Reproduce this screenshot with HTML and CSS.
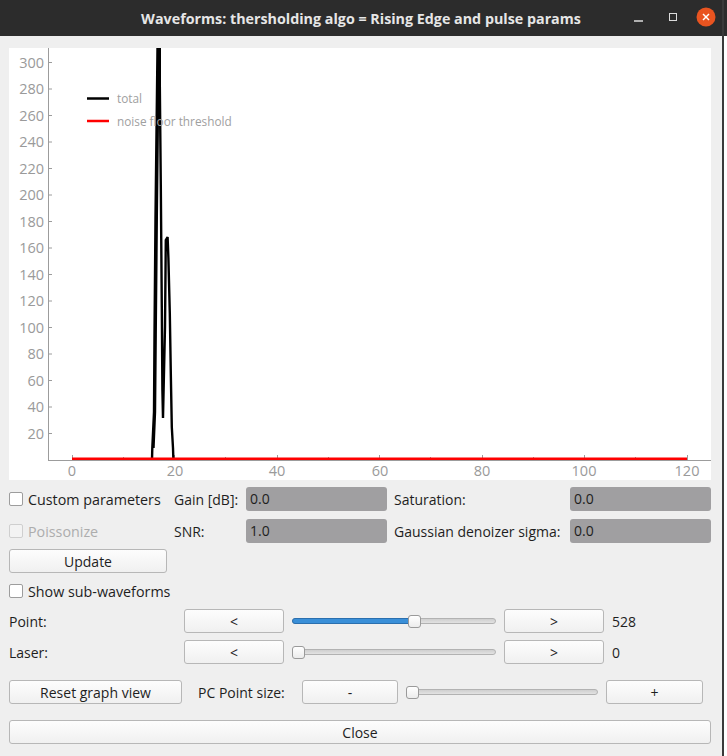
FILE: index.html
```html
<!DOCTYPE html>
<html>
<head>
<meta charset="utf-8">
<title>Waveforms</title>
<link rel="stylesheet" href="styles.css">
</head>
<body>
<div class="screen">
  <div class="dialog">
    <div class="titlebar">
      <div></div>
      <div class="title">Waveforms: thersholding algo = Rising Edge and pulse params</div>
      <div class="wincontrols">
        <svg width="90" height="36" viewBox="0 0 90 36">
          <line x1="2" y1="21" x2="11" y2="21" stroke="#dcdcdc" stroke-width="1.5"/>
          <rect x="37.5" y="13.5" width="7" height="7" fill="none" stroke="#dcdcdc" stroke-width="1"/>
          <circle cx="74" cy="17" r="9.5" fill="#e95420"/>
          <line x1="71" y1="14" x2="77" y2="20" stroke="#fff" stroke-width="1.4"/>
          <line x1="77" y1="14" x2="71" y2="20" stroke="#fff" stroke-width="1.4"/>
        </svg>
      </div>
    </div>

    <div class="content">
      <div class="plot">
        <svg class="chart" width="702" height="432" viewBox="0 0 702 432">
          <g class="axis">
            <line x1="39.5" y1="0" x2="39.5" y2="412.5"/>
            <line x1="39" y1="412.5" x2="702" y2="412.5"/>
            <line x1="39" y1="385.5" x2="43" y2="385.5"/>
            <line x1="39" y1="359" x2="43" y2="359"/>
            <line x1="39" y1="332.5" x2="43" y2="332.5"/>
            <line x1="39" y1="306" x2="43" y2="306"/>
            <line x1="39" y1="279.5" x2="43" y2="279.5"/>
            <line x1="39" y1="253" x2="43" y2="253"/>
            <line x1="39" y1="226.5" x2="43" y2="226.5"/>
            <line x1="39" y1="200" x2="43" y2="200"/>
            <line x1="39" y1="173.5" x2="43" y2="173.5"/>
            <line x1="39" y1="147" x2="43" y2="147"/>
            <line x1="39" y1="120.5" x2="43" y2="120.5"/>
            <line x1="39" y1="94" x2="43" y2="94"/>
            <line x1="39" y1="67.5" x2="43" y2="67.5"/>
            <line x1="39" y1="41" x2="43" y2="41"/>
            <line x1="39" y1="14.5" x2="43" y2="14.5"/>
            <line x1="63.5" y1="407" x2="63.5" y2="412"/>
            <line x1="165.5" y1="407" x2="165.5" y2="412"/>
            <line x1="268.5" y1="407" x2="268.5" y2="412"/>
            <line x1="370.5" y1="407" x2="370.5" y2="412"/>
            <line x1="473.5" y1="407" x2="473.5" y2="412"/>
            <line x1="575.5" y1="407" x2="575.5" y2="412"/>
            <line x1="678.5" y1="407" x2="678.5" y2="412"/>
          </g>
          <g class="axis minor">
            <line x1="114.5" y1="409" x2="114.5" y2="412"/>
            <line x1="216.5" y1="409" x2="216.5" y2="412"/>
            <line x1="421.5" y1="409" x2="421.5" y2="412"/>
            <line x1="319.5" y1="409" x2="319.5" y2="412"/>
            <line x1="524.5" y1="409" x2="524.5" y2="412"/>
            <line x1="626.5" y1="409" x2="626.5" y2="412"/>
          </g>
          <g class="ylabels">
            <text x="35" y="390.5">20</text>
            <text x="35" y="364">40</text>
            <text x="35" y="337.5">60</text>
            <text x="35" y="311">80</text>
            <text x="35" y="284.5">100</text>
            <text x="35" y="258">120</text>
            <text x="35" y="231.5">140</text>
            <text x="35" y="205">160</text>
            <text x="35" y="178.5">180</text>
            <text x="35" y="152">200</text>
            <text x="35" y="125.5">220</text>
            <text x="35" y="99">240</text>
            <text x="35" y="72.5">260</text>
            <text x="35" y="46">280</text>
            <text x="35" y="19.5">300</text>
          </g>
          <g class="xlabels">
            <text x="63" y="428">0</text>
            <text x="166" y="428">20</text>
            <text x="268" y="428">40</text>
            <text x="371" y="428">60</text>
            <text x="473" y="428">80</text>
            <text x="575" y="428">100</text>
            <text x="678" y="428">120</text>
          </g>
          <polyline class="wave" points="143,412 143.3,400 145,364 145.5,287 146.5,169 148.5,0 148.8,-5 150.8,-5 150.8,35 151.8,137 152.8,259 153.4,342 154,370 154.6,342 156,279 156.8,192 158.6,189 159.4,210 160.8,265 161.8,325 162.8,379 164,400 164.4,412"/>
          <polyline class="wave" points="144.5,400 146,364 146.7,287 147.8,169 149.6,0"/>
          <line class="thresh" x1="63" y1="410.8" x2="678" y2="410.8"/>
          <line x1="78" y1="50.5" x2="100" y2="50.5" stroke="#000" stroke-width="2.5"/>
          <line x1="78" y1="73" x2="100" y2="73" stroke="#ff0000" stroke-width="2.5"/>
          <text class="legend" x="108" y="55">total</text>
          <text class="legend" x="108" y="77.5">noise floor threshold</text>
        </svg>
      </div>

      <div class="params">
        <label class="check"><span class="box"></span>Custom parameters</label>
        <span class="lbl">Gain [dB]:</span>
        <div class="field">0.0</div>
        <span class="lbl">Saturation:</span>
        <div class="field">0.0</div>
        <label class="check disabled"><span class="box"></span>Poissonize</label>
        <span class="lbl">SNR:</span>
        <div class="field">1.0</div>
        <span class="lbl">Gaussian denoizer sigma:</span>
        <div class="field">0.0</div>
      </div>

      <div class="update-row"><button class="btn update">Update</button></div>

      <label class="check sub"><span class="box"></span>Show sub-waveforms</label>

      <div class="nav-row first">
        <span class="lbl">Point:</span>
        <button class="btn">&lt;</button>
        <div class="slider" style="--f:0.607">
          <div class="groove"></div>
          <div class="fill"></div>
          <div class="handle"></div>
        </div>
        <button class="btn">&gt;</button>
        <span class="lbl">528</span>
      </div>

      <div class="nav-row">
        <span class="lbl">Laser:</span>
        <button class="btn">&lt;</button>
        <div class="slider" style="--f:0">
          <div class="groove"></div>
          <div class="handle"></div>
        </div>
        <button class="btn">&gt;</button>
        <span class="lbl">0</span>
      </div>

      <div class="tool-row">
        <button class="btn reset">Reset graph view</button>
        <span class="lbl pcsize">PC Point size:</span>
        <button class="btn small">-</button>
        <div class="slider pcslider" style="--f:0">
          <div class="groove"></div>
          <div class="handle"></div>
        </div>
        <button class="btn small plus">+</button>
      </div>

      <button class="btn close">Close</button>
    </div>
  </div>
  <div class="edge"></div>
  <div class="other">
    <div class="other-top"></div>
  </div>
</div>
</body>
</html>
```

FILE: styles.css
```css
* { box-sizing: border-box; }

html, body {
  margin: 0;
  padding: 0;
}

body {
  width: 727px;
  height: 756px;
  overflow: hidden;
  font-family: "Open Sans", "Noto Sans", sans-serif;
  font-size: 14px;
  color: #1e1e1e;
  background: #ffffff;
}

.screen {
  display: flex;
  height: 756px;
}

.dialog {
  width: 722px;
  flex: none;
  background: #efefef;
  display: flex;
  flex-direction: column;
}

.titlebar {
  height: 36px;
  flex: none;
  background: #2c2c2c;
  display: grid;
  grid-template-columns: 1fr auto 1fr;
  align-items: center;
}

.title {
  color: #e6e6e6;
  font-weight: 700;
  font-size: 14.3px;
  white-space: nowrap;
}

.wincontrols {
  display: flex;
  justify-content: flex-end;
}

.wincontrols svg { display: block; }

.content {
  padding: 12px 11px 0 9px;
  display: flex;
  flex-direction: column;
}

.plot {
  height: 432px;
  background: #ffffff;
  overflow: hidden;
}

.chart { display: block; overflow: hidden; }

.axis line {
  stroke: #9c9c9c;
  stroke-width: 1;
}

.ylabels text,
.xlabels text {
  font-family: "Open Sans", sans-serif;
  font-size: 14.5px;
  fill: #9a9a9a;
}

.ylabels text { text-anchor: end; }
.xlabels text { text-anchor: middle; }

.wave {
  fill: none;
  stroke: #000;
  stroke-width: 2.4;
  stroke-linejoin: miter;
  stroke-miterlimit: 2;
}

.thresh {
  stroke: #ff0000;
  stroke-width: 2.6;
}

.legend {
  font-family: "Open Sans", sans-serif;
  font-size: 11.8px;
  fill: #a0a0a0;
}

.params {
  margin-top: 7px;
  display: grid;
  grid-template-columns: 158px 65px 141px 169px 141px;
  grid-template-rows: 24px 24px;
  column-gap: 7px;
  row-gap: 8px;
  align-items: center;
}

.lbl { white-space: nowrap; }

.check {
  display: flex;
  align-items: center;
  gap: 5px;
  white-space: nowrap;
  font-size: 14.3px;
}

.box {
  width: 14px;
  height: 14px;
  flex: none;
  border: 1px solid #9d9d9d;
  border-radius: 2px;
  background: #ffffff;
}

.check.disabled { color: #adadad; }
.check.disabled .box {
  border-color: #cfcfcf;
  background: #f3f3f3;
}

.field {
  height: 24px;
  background: #a09fa1;
  border-radius: 3px;
  padding-left: 4px;
  line-height: 24px;
}

.btn {
  height: 24px;
  margin: 0;
  padding: 0;
  border: 1px solid #b7b7b7;
  border-radius: 3px;
  background: linear-gradient(#fdfdfd, #f0f0f0);
  font-family: "Open Sans", "Noto Sans", sans-serif;
  font-size: 14px;
  color: #1e1e1e;
}

.update-row {
  margin-top: 6px;
  display: flex;
}

.update { width: 158px; }

.check.sub {
  margin-top: 6px;
  height: 24px;
}

.nav-row {
  margin-top: 7px;
  height: 24px;
  display: grid;
  grid-template-columns: 167px 100px 204px 100px auto;
  column-gap: 8px;
  align-items: center;
}

.nav-row.first { margin-top: 6px; }

.slider {
  position: relative;
  height: 24px;
  display: flex;
  align-items: center;
}

.groove {
  flex: 1;
  height: 6px;
  border: 1px solid #b2b2b2;
  border-radius: 3px;
  background: linear-gradient(#cfcfcf, #e2e2e2);
}

.fill {
  position: absolute;
  left: 0;
  top: 9px;
  height: 6px;
  width: calc(var(--f) * (100% - 13px) + 6px);
  border: 1px solid #2b6fae;
  border-radius: 3px;
  background: #3a8fd8;
}

.handle {
  position: absolute;
  top: 6px;
  left: calc(var(--f) * (100% - 13px));
  width: 13px;
  height: 13px;
  border: 1px solid #9a9a9a;
  border-radius: 3px;
  background: linear-gradient(#ffffff, #ececec);
}

.tool-row {
  margin-top: 16px;
  height: 24px;
  display: flex;
  align-items: center;
  gap: 8px;
}

.reset { width: 173px; flex: none; }

.pcsize {
  width: 96px;
  margin-left: 8px;
  flex: none;
}

.small { width: 96px; flex: none; }
.small.plus { width: 97px; }

.pcslider { width: 192px; flex: none; }

.close {
  margin-top: 16px;
  width: 100%;
}

.edge {
  width: 2px;
  flex: none;
  background: #3a3a3a;
}

.other {
  flex: 1;
  background: #ffffff;
}

.other-top {
  height: 36px;
  background: #2c2c2c;
}
```
